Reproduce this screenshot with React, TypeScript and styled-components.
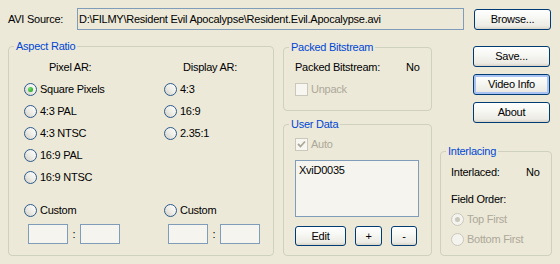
import styled, { createGlobalStyle } from 'styled-components';

const GlobalStyle = createGlobalStyle`
  html, body {
    margin: 0;
    padding: 0;
    background: #ece9d8;
  }
  body {
    font-family: 'Liberation Sans', Arial, sans-serif;
    font-size: 11px;
    letter-spacing: -0.25px;
    color: #000;
  }
`;

const Dialog = styled.div`
  width: 560px;
  height: 264px;
  box-sizing: border-box;
  padding: 8px 8px 0 8px;
  background: #ece9d8;
  display: flex;
  flex-direction: column;
`;

const TopRow = styled.div`
  display: flex;
  align-items: center;
  height: 22px;
`;

const SourceLabel = styled.span`
  width: 69px;
`;

const PathField = styled.div`
  width: 387px;
  height: 22px;
  box-sizing: border-box;
  border: 1px solid #7f9db9;
  padding: 0 1px;
  display: flex;
  align-items: center;
  white-space: nowrap;
  overflow: hidden;
`;

const Body = styled.div`
  display: flex;
  margin-top: 10px;
  height: 216px;
`;

const GroupBox = styled.fieldset<{ $width: number; $height: number }>`
  margin: 0;
  padding: 0;
  min-width: 0;
  width: ${(p) => p.$width}px;
  height: ${(p) => p.$height}px;
  box-sizing: border-box;
  border: 1px solid #d0d0bf;
  border-radius: 4px;
`;

const GroupTitle = styled.legend`
  color: #0046d5;
  padding: 0 2px;
  margin-left: 5px;
  line-height: 12px;
  font-size: 11px;
`;

const AspectContent = styled.div`
  display: flex;
  padding: 4px 0 0 15px;
`;

const AspectColumn = styled.div<{ $width?: number }>`
  display: flex;
  flex-direction: column;
  width: ${(p) => (p.$width ? `${p.$width}px` : 'auto')};
`;

const ColumnHeader = styled.div<{ $indent: number }>`
  line-height: 22px;
  padding-left: ${(p) => p.$indent}px;
`;

const OptionList = styled.div`
  display: flex;
  flex-direction: column;
  height: 110px;
  margin-bottom: 11px;
`;

const OptionRow = styled.label<{ $height?: number; $disabled?: boolean }>`
  display: flex;
  align-items: center;
  gap: 3px;
  height: ${(p) => p.$height ?? 22}px;
  color: ${(p) => (p.$disabled ? '#aca899' : '#000')};
  white-space: nowrap;
`;

const RadioMark = styled.span<{ $checked?: boolean; $disabled?: boolean }>`
  position: relative;
  flex: none;
  width: 13px;
  height: 13px;
  box-sizing: border-box;
  border-radius: 50%;
  border: 1px solid ${(p) => (p.$disabled ? '#cac8bb' : '#2c5a8c')};
  background: ${(p) =>
    p.$disabled
      ? '#f4f3ee'
      : 'linear-gradient(to top right, #d2cfc4 0%, #eeede7 50%, #ffffff 100%)'};

  &::after {
    content: '';
    display: ${(p) => (p.$checked ? 'block' : 'none')};
    position: absolute;
    left: 3px;
    top: 3px;
    width: 5px;
    height: 5px;
    border-radius: 50%;
    background: ${(p) =>
      p.$disabled
        ? '#cac8bb'
        : 'radial-gradient(circle at 35% 35%, #6fe36f 0%, #21a121 80%)'};
  }
`;

const CheckMark = styled.span<{ $disabled?: boolean }>`
  flex: none;
  width: 13px;
  height: 13px;
  box-sizing: border-box;
  border: 1px solid ${(p) => (p.$disabled ? '#cac8bb' : '#1c5180')};
  background: ${(p) => (p.$disabled ? '#f7f6f1' : '#fff')};
  display: flex;
  align-items: center;
  justify-content: center;
`;

const RatioInputs = styled.div`
  display: flex;
  align-items: center;
  margin-top: 3px;
  padding-left: 4px;
`;

const RatioBox = styled.div`
  width: 40px;
  height: 20px;
  box-sizing: border-box;
  border: 1px solid #7f9db9;
  background: #f5f4ee;
`;

const RatioColon = styled.span`
  width: 12px;
  text-align: center;
`;

const MiddleColumn = styled.div`
  display: flex;
  flex-direction: column;
  gap: 7px;
  margin-left: 9px;
  padding-top: 1px;
`;

const GroupContent = styled.div<{ $top: number; $left: number }>`
  display: flex;
  flex-direction: column;
  padding: ${(p) => p.$top}px 0 0 ${(p) => p.$left}px;
`;

const InfoRow = styled.div<{ $labelWidth: number; $height?: number; $gapTop?: number }>`
  display: grid;
  grid-template-columns: ${(p) => p.$labelWidth}px auto;
  align-items: center;
  height: ${(p) => p.$height ?? 22}px;
  margin-top: ${(p) => p.$gapTop ?? 0}px;
`;

const UserList = styled.div`
  width: 124px;
  height: 57px;
  box-sizing: border-box;
  margin-top: 5px;
  border: 1px solid #7f9db9;
  background: #f5f4ee;
  padding: 3px 3px;
`;

const ButtonRow = styled.div`
  display: flex;
  gap: 9px;
  margin-top: 9px;
`;

const PushButton = styled.button<{ $width: number; $height?: number; $focused?: boolean }>`
  width: ${(p) => p.$width}px;
  height: ${(p) => p.$height ?? 21}px;
  box-sizing: border-box;
  padding: 0;
  border: 1px solid #003c74;
  border-radius: 3px;
  background: linear-gradient(
    to bottom,
    #ffffff 0%,
    #f6f6f2 45%,
    #ecebe4 85%,
    #d8d3c8 100%
  );
  box-shadow: ${(p) => (p.$focused ? 'inset 0 0 0 2px #a9c2f4' : 'none')};
  font-family: inherit;
  font-size: 11px;
  letter-spacing: inherit;
  color: #000;
  line-height: 1;
`;

const RightColumn = styled.div`
  display: flex;
  flex-direction: column;
  margin-left: 8px;
  width: 112px;
`;

const ButtonStack = styled.div`
  display: flex;
  flex-direction: column;
  gap: 7px;
  margin-top: 6px;
  padding-left: 33px;
`;

const InterlaceBox = styled(GroupBox)`
  margin-top: auto;
`;

const BrowseButton = styled(PushButton)`
  margin-left: 10px;
`;

function Radio({
  label,
  checked,
  disabled,
  height,
}: {
  label: string;
  checked?: boolean;
  disabled?: boolean;
  height?: number;
}) {
  return (
    <OptionRow $disabled={disabled} $height={height}>
      <RadioMark $checked={checked} $disabled={disabled} />
      {label}
    </OptionRow>
  );
}

function Check({ label, checked }: { label: string; checked?: boolean }) {
  return (
    <OptionRow $disabled>
      <CheckMark $disabled>
        {checked && (
          <svg width="9" height="9" viewBox="0 0 9 9">
            <path d="M1 4 L3.5 6.5 L8 1.5" fill="none" stroke="#aca899" strokeWidth="1.8" />
          </svg>
        )}
      </CheckMark>
      {label}
    </OptionRow>
  );
}

function Ratio() {
  return (
    <RatioInputs>
      <RatioBox />
      <RatioColon>:</RatioColon>
      <RatioBox />
    </RatioInputs>
  );
}

export default function App() {
  return (
    <>
      <GlobalStyle />
      <Dialog>
        <TopRow>
          <SourceLabel>AVI Source:</SourceLabel>
          <PathField>D:\FILMY\Resident Evil Apocalypse\Resident.Evil.Apocalypse.avi</PathField>
          <BrowseButton $width={77}>Browse...</BrowseButton>
        </TopRow>
        <Body>
          <GroupBox $width={267} $height={216}>
            <GroupTitle>Aspect Ratio</GroupTitle>
            <AspectContent>
              <AspectColumn $width={140}>
                <ColumnHeader $indent={25}>Pixel AR:</ColumnHeader>
                <OptionList>
                  <Radio label="Square Pixels" checked />
                  <Radio label="4:3 PAL" />
                  <Radio label="4:3 NTSC" />
                  <Radio label="16:9 PAL" />
                  <Radio label="16:9 NTSC" />
                </OptionList>
                <Radio label="Custom" />
                <Ratio />
              </AspectColumn>
              <AspectColumn>
                <ColumnHeader $indent={19}>Display AR:</ColumnHeader>
                <OptionList>
                  <Radio label="4:3" />
                  <Radio label="16:9" />
                  <Radio label="2.35:1" />
                </OptionList>
                <Radio label="Custom" />
                <Ratio />
              </AspectColumn>
            </AspectContent>
          </GroupBox>

          <MiddleColumn>
            <GroupBox $width={149} $height={70}>
              <GroupTitle>Packed Bitstream</GroupTitle>
              <GroupContent $top={3} $left={11}>
                <InfoRow $labelWidth={111}>
                  <span>Packed Bitstream:</span>
                  <span>No</span>
                </InfoRow>
                <Check label="Unpack" />
              </GroupContent>
            </GroupBox>
            <GroupBox $width={149} $height={138}>
              <GroupTitle>User Data</GroupTitle>
              <GroupContent $top={3} $left={11}>
                <Check label="Auto" checked />
                <UserList>XviD0035</UserList>
                <ButtonRow>
                  <PushButton $width={51} $height={20}>Edit</PushButton>
                  <PushButton $width={27} $height={20}>+</PushButton>
                  <PushButton $width={26} $height={20}>-</PushButton>
                </ButtonRow>
              </GroupContent>
            </GroupBox>
          </MiddleColumn>

          <RightColumn>
            <ButtonStack>
              <PushButton $width={77}>Save...</PushButton>
              <PushButton $width={77} $focused>Video Info</PushButton>
              <PushButton $width={77}>About</PushButton>
            </ButtonStack>
            <InterlaceBox $width={112} $height={111}>
              <GroupTitle>Interlacing</GroupTitle>
              <GroupContent $top={5} $left={10}>
                <InfoRow $labelWidth={75} $height={20}>
                  <span>Interlaced:</span>
                  <span>No</span>
                </InfoRow>
                <InfoRow $labelWidth={75} $height={20} $gapTop={7}>
                  <span>Field Order:</span>
                </InfoRow>
                <Radio label="Top First" checked disabled height={20} />
                <Radio label="Bottom First" disabled height={20} />
              </GroupContent>
            </InterlaceBox>
          </RightColumn>
        </Body>
      </Dialog>
    </>
  );
}
